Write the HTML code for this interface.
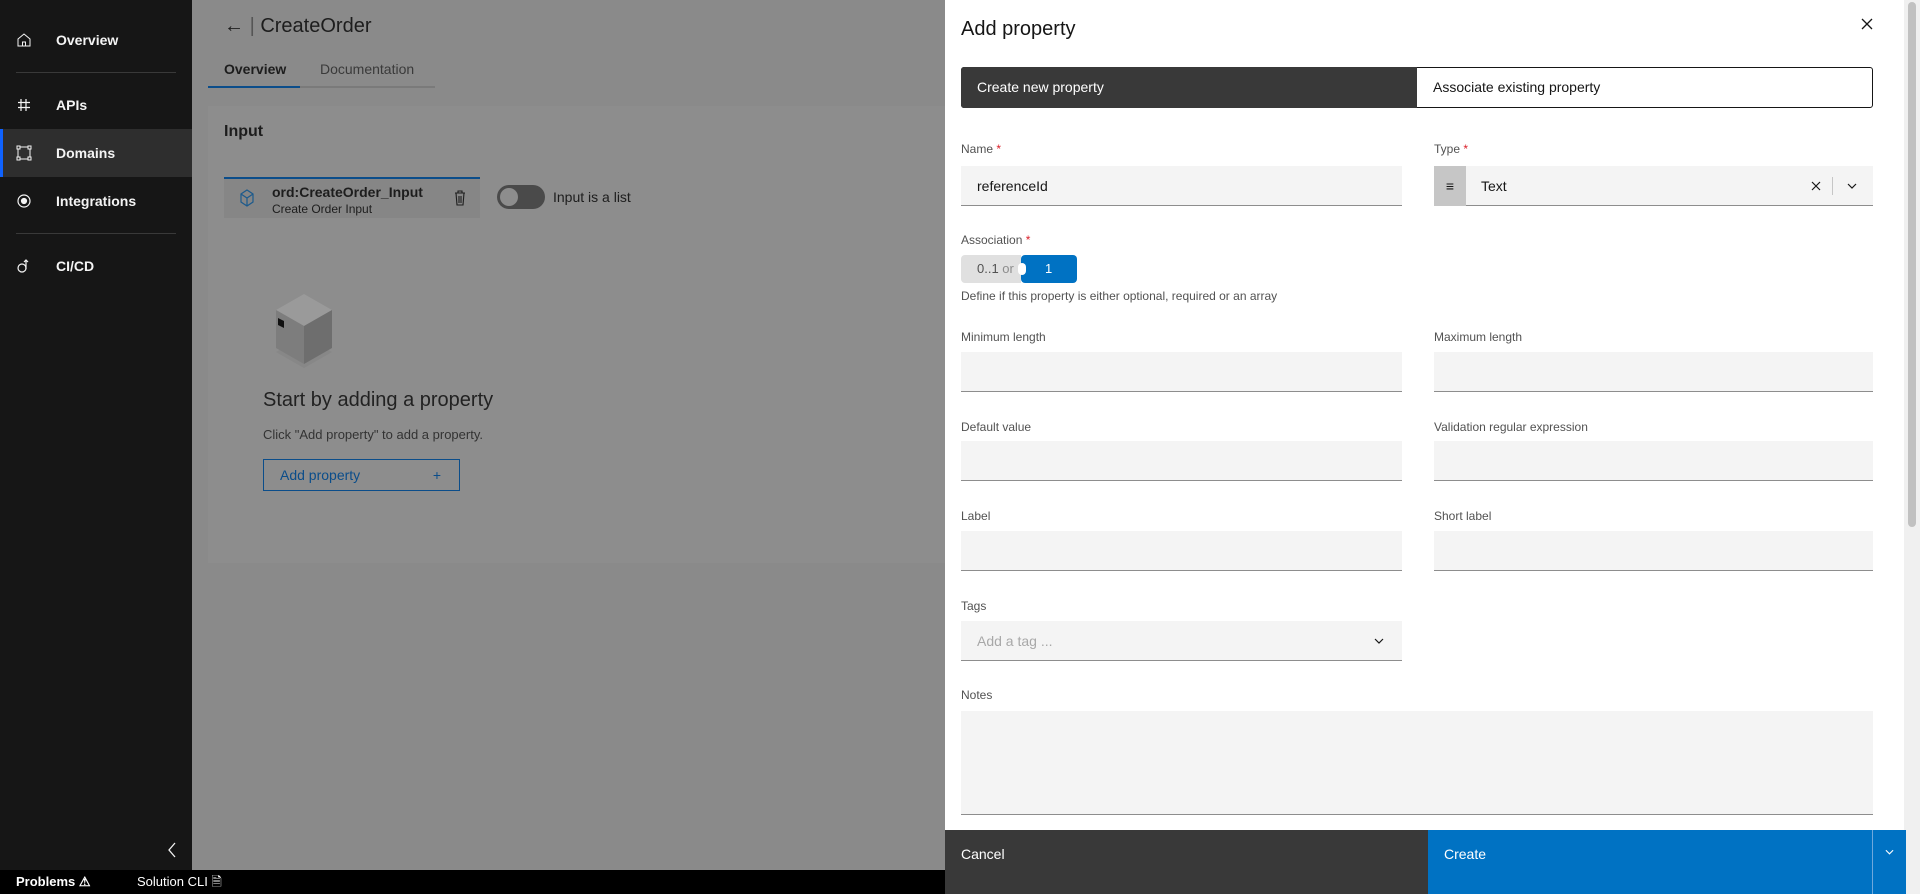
<!DOCTYPE html>
<html><head><meta charset="utf-8"><style>
*{box-sizing:border-box;margin:0;padding:0}
body{width:1920px;height:894px;overflow:hidden;font-family:"Liberation Sans",sans-serif;background:#8a8a8a;position:relative}
.a{position:absolute}
.side{left:0;top:0;width:192px;height:870px;background:#161616}
.nav{position:absolute;left:0;width:192px;height:48px;color:#f4f4f4;font-size:14px;font-weight:bold;line-height:48px;padding-left:56px}
.nav svg{position:absolute;left:16px;top:16px}
.hr{position:absolute;left:16px;width:160px;height:1px;background:#393939}
.lbl{position:absolute;font-size:12px;color:#525252}
.lbl b{color:#da1e28;font-weight:normal}
.in{position:absolute;height:40px;background:#f4f4f4;border-bottom:1px solid #8d8d8d}
.dim{color:#1d1d1d}
</style></head><body>
<div class="a side"></div>
<div class="nav" style="top:16px">Overview<svg width="16" height="16" viewBox="0 0 16 16" fill="none" stroke="#f4f4f4" stroke-width="1"><path d="M2 7L8 2l6 5v7H2z"/><path d="M6.5 14v-4h3v4"/></svg></div>
<div class="hr" style="top:72px"></div>
<div class="nav" style="top:81px">APIs<svg width="16" height="16" viewBox="0 0 16 16" stroke="#f4f4f4" stroke-width="1.2"><path d="M5 2v12M10 2v12M2 5.5h12M2 10.5h12"/></svg></div>
<div class="nav" style="top:129px;background:#2e2e2e">Domains<svg width="16" height="16" viewBox="0 0 16 16" fill="none" stroke="#f4f4f4" stroke-width="1"><rect x="2" y="2" width="12" height="12"/><rect x="1" y="1" width="3" height="3" fill="#2e2e2e"/><rect x="12" y="1" width="3" height="3" fill="#2e2e2e"/><rect x="1" y="12" width="3" height="3" fill="#2e2e2e"/><rect x="12" y="12" width="3" height="3" fill="#2e2e2e"/></svg></div>
<div class="a" style="left:0;top:129px;width:3px;height:48px;background:#0f62fe"></div>
<div class="nav" style="top:177px">Integrations<svg width="16" height="16" viewBox="0 0 16 16" fill="none" stroke="#f4f4f4" stroke-width="1.2"><circle cx="8" cy="8" r="6"/><circle cx="8" cy="8" r="2.5" fill="#f4f4f4"/></svg></div>
<div class="hr" style="top:233px"></div>
<div class="nav" style="top:242px">CI/CD<svg width="16" height="16" viewBox="0 0 16 16" fill="none" stroke="#f4f4f4" stroke-width="1.2"><circle cx="6" cy="10" r="4"/><path d="M10 11V2M8 4l2-2 2 2"/></svg></div>
<svg class="a" style="left:166px;top:841px" width="12" height="18" viewBox="0 0 12 18" fill="none" stroke="#f4f4f4" stroke-width="1.3"><path d="M9 2L3 9l6 7"/></svg>

<div class="a" style="left:0;top:870px;width:1920px;height:24px;background:#000;color:#fff;font-size:13px;line-height:24px">
<span style="position:absolute;left:16px;font-weight:bold">Problems ⚠</span>
<span style="position:absolute;left:137px">Solution CLI 🗎</span></div>

<!-- main dimmed -->
<div class="a dim" style="left:224px;top:12px;font-size:20px;line-height:28px">←&nbsp;<span style="color:#555">|</span> CreateOrder</div>
<div class="a dim" style="left:224px;top:61px;font-size:14px;font-weight:bold">Overview</div>
<div class="a" style="left:320px;top:61px;font-size:14px;color:#3a3a3a">Documentation</div>
<div class="a" style="left:208px;top:86px;width:227px;height:2px;background:#7a7a7a"></div>
<div class="a" style="left:208px;top:86px;width:92px;height:2px;background:#0b4d8a"></div>
<div class="a" style="left:208px;top:106px;width:740px;height:457px;background:#8d8d8d"></div>
<div class="a dim" style="left:224px;top:123px;font-size:16px;font-weight:bold">Input</div>
<div class="a" style="left:224px;top:177px;width:256px;height:41px;background:#868686;border-top:2px solid #0b4d8a"></div>
<svg class="a" style="left:239px;top:189px" width="16" height="18" viewBox="0 0 16 18" fill="none" stroke="#1c5a8c" stroke-width="1.2"><path d="M8 1l6 4v8l-6 4-6-4V5z M2 5l6 4 6-4 M8 9v8"/></svg>
<div class="a dim" style="left:272px;top:184px;font-size:14px;font-weight:bold">ord:CreateOrder_Input</div>
<div class="a dim" style="left:272px;top:202px;font-size:12px">Create Order Input</div>
<svg class="a" style="left:454px;top:190px" width="12" height="16" viewBox="0 0 12 16" fill="none" stroke="#1d1d1d" stroke-width="1.1"><path d="M1 3h10M4 3V1h4v2M2 3l1 12h6l1-12M5 6v7M7 6v7"/></svg>
<div class="a" style="left:497px;top:185px;width:48px;height:24px;border-radius:12px;background:#4a4a4a"></div>
<div class="a" style="left:500px;top:188px;width:18px;height:18px;border-radius:9px;background:#8d8d8d"></div>
<div class="a dim" style="left:553px;top:189px;font-size:14px">Input is a list</div>
<svg class="a" style="left:272px;top:292px" width="64" height="78" viewBox="0 0 64 78"><path d="M4 60l28 16 28-16-28-16z" fill="#878787"/><path d="M4 18l28-16 28 16-28 16z" fill="#9a9a9a"/><path d="M4 18l28 16v38L4 56z" fill="#7d7d7d"/><path d="M32 34l28-16v38L32 72z" fill="#6e6e6e"/><path d="M6 26l6 3v7l-6-3z" fill="#111"/></svg>
<div class="a" style="left:263px;top:389px;font-size:20px;color:#222">Start by adding a property</div>
<div class="a" style="left:263px;top:427px;font-size:13px;color:#333">Click "Add property" to add a property.</div>
<div class="a" style="left:263px;top:459px;width:197px;height:32px;border:1px solid #0b4d8a;color:#0b4d8a;font-size:14px;line-height:30px;padding-left:16px">Add property<span style="position:absolute;right:18px">+</span></div>

<!-- modal -->
<div class="a" style="left:945px;top:0;width:975px;height:894px;background:#fff"></div>
<div class="a" style="left:1904px;top:0;width:16px;height:894px;background:#f0f0f0"></div>
<div class="a" style="left:1908px;top:2px;width:8px;height:525px;border-radius:4px;background:#c1c1c1"></div>
<div class="a" style="left:961px;top:18px;font-size:20px;color:#161616">Add property</div>
<svg class="a" style="left:1861px;top:18px" width="12" height="12" viewBox="0 0 12 12" stroke="#161616" stroke-width="1.3"><path d="M1 1l10 10M11 1L1 11"/></svg>
<div class="a" style="left:961px;top:67px;width:912px;height:41px;border:1px solid #161616;border-radius:3px;background:#fff"></div>
<div class="a" style="left:961px;top:67px;width:456px;height:41px;background:#393939;border-radius:3px 0 0 3px;color:#fff;font-size:14px;line-height:41px;padding-left:16px">Create new property</div>
<div class="a" style="left:1433px;top:67px;font-size:14px;line-height:41px;color:#161616">Associate existing property</div>

<div class="lbl" style="left:961px;top:142px">Name <b>*</b></div>
<div class="in" style="left:961px;top:166px;width:441px;font-size:14px;line-height:40px;padding-left:16px;color:#161616">referenceId</div>
<div class="lbl" style="left:1434px;top:142px">Type <b>*</b></div>
<div class="in" style="left:1434px;top:166px;width:439px;font-size:14px;line-height:40px;color:#161616"><span style="position:absolute;left:0;top:0;width:32px;height:40px;background:#c6c6c6;text-align:center">≡</span><span style="position:absolute;left:47px">Text</span><svg style="position:absolute;right:52px;top:15px" width="10" height="10" viewBox="0 0 10 10" stroke="#161616" stroke-width="1.2"><path d="M1 1l8 8M9 1L1 9"/></svg><span style="position:absolute;right:40px;top:11px;width:1px;height:18px;background:#c6c6c6"></span><svg style="position:absolute;right:16px;top:17px" width="10" height="6" viewBox="0 0 10 6" fill="none" stroke="#161616" stroke-width="1.2"><path d="M1 1l4 4 4-4"/></svg></div>

<div class="lbl" style="left:961px;top:233px">Association <b>*</b></div>
<div class="a" style="left:961px;top:255px;width:60px;height:28px;background:#e0e0e0;border-radius:4px 0 0 4px;font-size:13px;color:#525252;line-height:28px;padding-left:16px">0..1 <span style="color:#8d8d8d">or</span></div>
<div class="a" style="left:1021px;top:255px;width:56px;height:28px;background:#0072c3;border-radius:4px;color:#fff;font-size:13px;line-height:28px;padding-left:24px">1</div>
<div class="a" style="left:1018px;top:263px;width:8px;height:12px;border-radius:6px;background:#fff"></div>
<div class="a" style="left:961px;top:289px;font-size:12px;color:#525252">Define if this property is either optional, required or an array</div>

<div class="lbl" style="left:961px;top:330px">Minimum length</div>
<div class="in" style="left:961px;top:352px;width:441px"></div>
<div class="lbl" style="left:1434px;top:330px">Maximum length</div>
<div class="in" style="left:1434px;top:352px;width:439px"></div>
<div class="lbl" style="left:961px;top:420px">Default value</div>
<div class="in" style="left:961px;top:441px;width:441px"></div>
<div class="lbl" style="left:1434px;top:420px">Validation regular expression</div>
<div class="in" style="left:1434px;top:441px;width:439px"></div>
<div class="lbl" style="left:961px;top:509px">Label</div>
<div class="in" style="left:961px;top:531px;width:441px"></div>
<div class="lbl" style="left:1434px;top:509px">Short label</div>
<div class="in" style="left:1434px;top:531px;width:439px"></div>
<div class="lbl" style="left:961px;top:599px">Tags</div>
<div class="in" style="left:961px;top:621px;width:441px;font-size:14px;line-height:40px;padding-left:16px;color:#a8a8a8">Add a tag ...<svg style="position:absolute;right:18px;top:17px" width="10" height="6" viewBox="0 0 10 6" fill="none" stroke="#161616" stroke-width="1.2"><path d="M1 1l4 4 4-4"/></svg></div>
<div class="lbl" style="left:961px;top:688px">Notes</div>
<div class="in" style="left:961px;top:711px;width:912px;height:104px"></div>

<div class="a" style="left:945px;top:830px;width:483px;height:64px;background:#393939;color:#fff;font-size:14px;padding:16px 0 0 16px">Cancel</div>
<div class="a" style="left:1428px;top:830px;width:478px;height:64px;background:#0072c3;color:#fff;font-size:14px;padding:16px 0 0 16px">Create</div>
<div class="a" style="left:1872px;top:830px;width:1px;height:64px;background:#6fa8dc"></div>
<svg class="a" style="left:1885px;top:849px" width="9" height="6" viewBox="0 0 10 6" fill="none" stroke="#fff" stroke-width="1.2"><path d="M1 1l4 4 4-4"/></svg>
</body></html>
